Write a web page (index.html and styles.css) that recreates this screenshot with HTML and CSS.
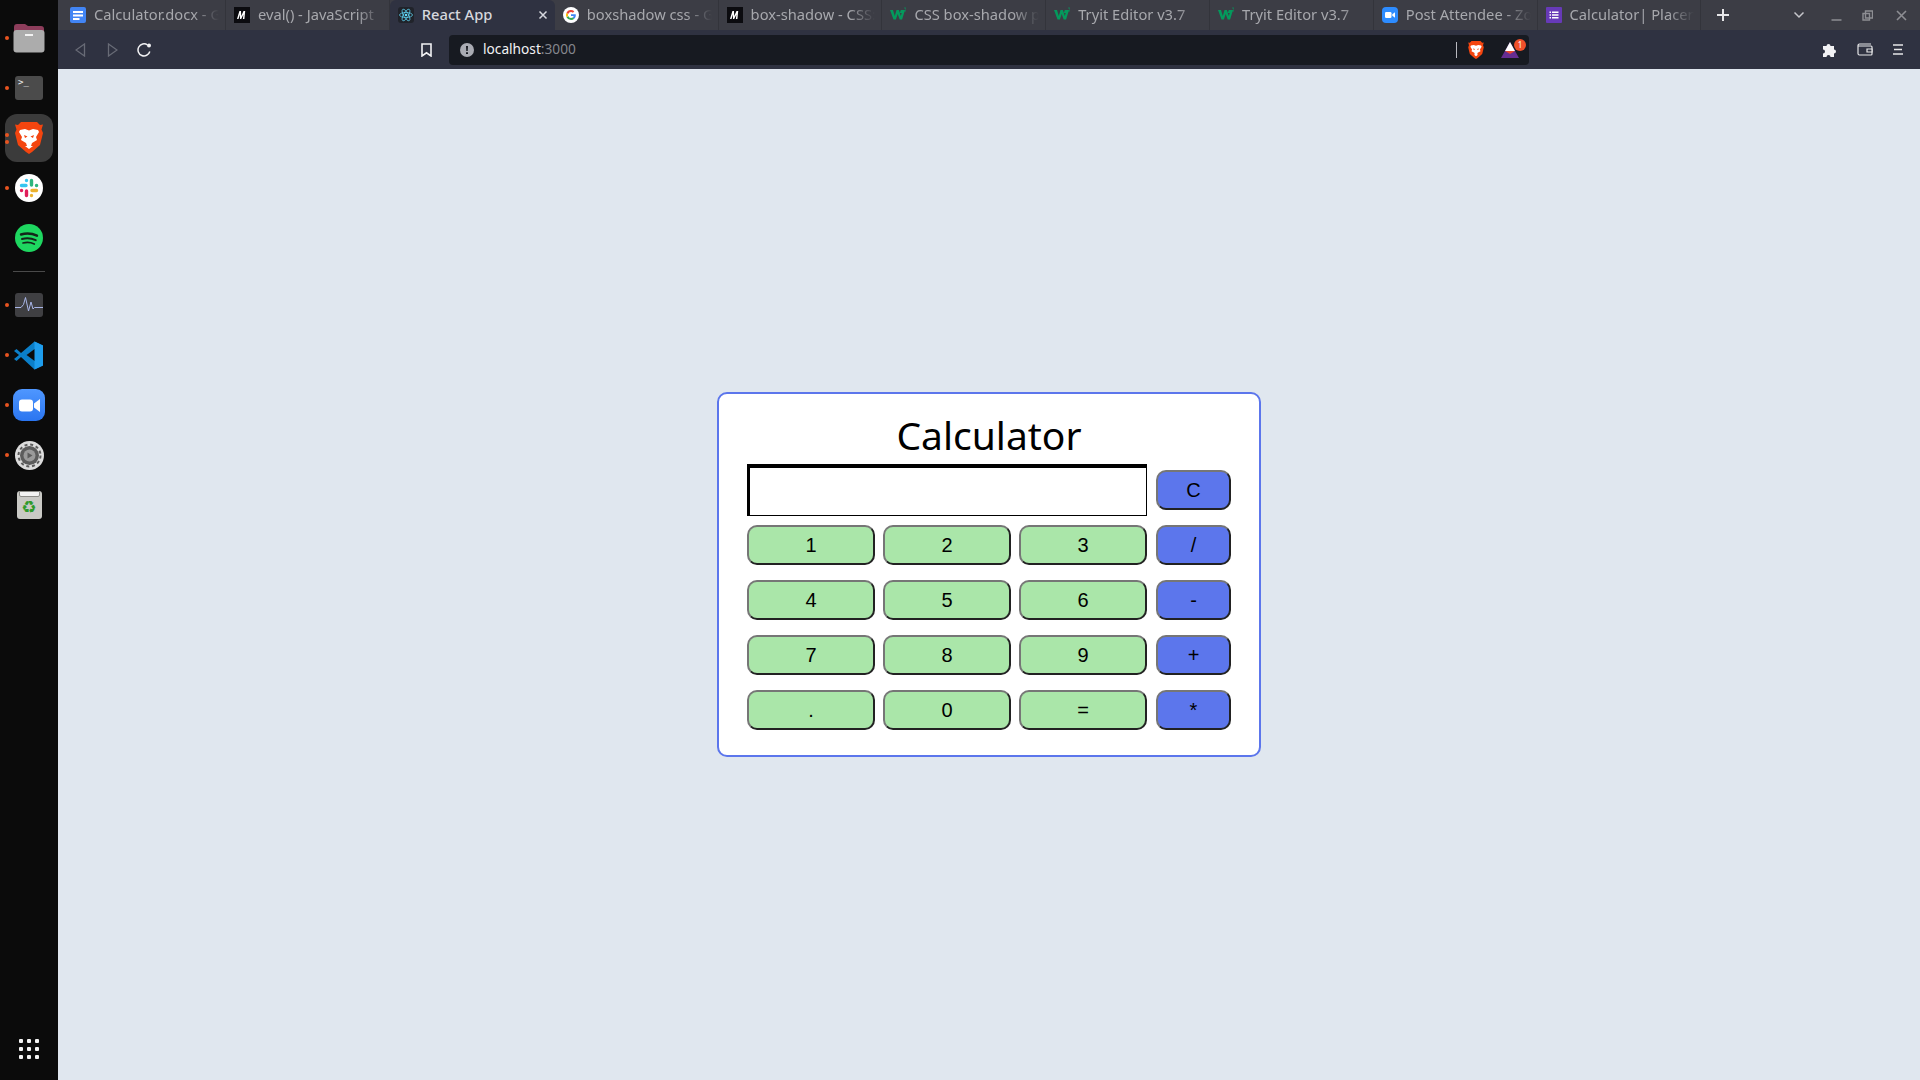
FILE: index.html
```html
<!DOCTYPE html>
<html lang="en">
<head>
    <meta charset="UTF-8">
    <title>React App</title>
    <link rel="stylesheet" href="styles.css">
</head>
<body>
    <svg class="defs" width="0" height="0">
        <symbol id="mdn" viewBox="0 0 16 16">
            <rect width="16" height="16" fill="#0b0b0f"/>
            <path d="M3 12 5.400 4H7l.2 5L9.500 4h1.700L10.400 12H8.900l.5-4.600L7.200 12H6l-.1-4.600L4.500 12z" fill="#fff"/>
        </symbol>
        <symbol id="w3" viewBox="0 0 16 16">
            <path d="M0 3h3l1.800 6L6.500 3h2.400l1.900 6 .9-3H9.800l1-3H15l-2.900 9.500H9.700L7.700 7l-1.800 5.500H3.500z" fill="#04995c"/>
            <path d="M14 1h2v3h-2" fill="none" stroke="#04995c" stroke-width=".7"/>
        </symbol>
        <symbol id="brave" viewBox="0 0 28 32">
            <path d="M6 0h16l3 3 3-.5-1.500 5L28 11l-3 12-8 7-3 2-3-2-8-7-3-12 1.500-3.500L0 2.500 3 3z" fill="#f4450f"/>
            <path d="M5 8l5-1 4 1.500L18 7l5 1 1 2-3 5 1 3-5 3-1 3h2l-4 3-4-3h2l-1-3-5-3 1-3-3-5z" fill="#fff"/>
            <path d="M9 13l3.500 1.500L10 16zM19 13l-3.500 1.500L18 16z" fill="#f4450f"/>
        </symbol>
    </svg>

    <aside class="dock">
        <div class="dock-item">
            <i class="dot"></i>
            <svg width="32" height="30" viewBox="0 0 32 30">
                <path d="M1 4a3 3 0 0 1 3-3h8l3 2h13a3 3 0 0 1 3 3v6H1z" fill="#8d3d5b"/>
                <path d="M1 8h30v3H1z" fill="#d8703c"/>
                <rect x="0.500" y="7" width="31" height="22.500" rx="3" fill="#acacac"/>
                <rect x="12" y="11" width="8" height="2" fill="#f2f2f2"/>
            </svg>
        </div>
        <div class="dock-item">
            <i class="dot"></i>
            <div class="term">&gt;_</div>
        </div>
        <div class="dock-item active">
            <i class="dot"></i><i class="dot second"></i>
            <svg width="28" height="32" viewBox="0 0 28 32"><use href="#brave"/></svg>
        </div>
        <div class="dock-item">
            <i class="dot"></i>
            <svg width="28" height="28" viewBox="0 0 28 28">
                <circle cx="14" cy="14" r="14" fill="#fff"/>
                <g stroke-width="3.400" stroke-linecap="round" fill="none">
                    <path d="M6.500 11.500h4.500M11.500 6.500v.1" stroke="#36c5f0"/>
                    <path d="M16.500 6.500v4.500M21.500 11.500h.1" stroke="#2eb67d"/>
                    <path d="M21.500 16.500H17M16.500 21.500v.1" stroke="#ecb22e"/>
                    <path d="M11.500 21.500V17M6.500 16.500h.1" stroke="#e01e5a"/>
                </g>
            </svg>
        </div>
        <div class="dock-item">
            <svg width="28" height="28" viewBox="0 0 28 28">
                <circle cx="14" cy="14" r="14" fill="#1ed760"/>
                <g fill="none" stroke="#14251a" stroke-linecap="round">
                    <path d="M6 10.500c5-1.500 11-1.200 16 1.200" stroke-width="2.400"/>
                    <path d="M7 15c4.500-1.200 9.500-.8 13.700 1.200" stroke-width="2"/>
                    <path d="M8 19c4-1 8-.6 11.300 1" stroke-width="1.700"/>
                </g>
            </svg>
        </div>
        <hr class="dock-sep">
        <div class="dock-item">
            <i class="dot"></i>
            <svg width="29" height="24" viewBox="0 0 29 24">
                <rect width="28" height="24" rx="3" fill="#3f3f42"/>
                <path d="M0 14.500h6l2.500-3 2-7 3 13.500 2.500-9 2 7 1.500-1.500H28" fill="none" stroke="#a9b6e8" stroke-width="1"/>
            </svg>
        </div>
        <div class="dock-item">
            <i class="dot"></i>
            <svg class="vscode" width="29" height="29" viewBox="0 0 29 29">
                <path d="M20.500.500 29 4.500v20l-8.500 4L7 16l-4.500 4L0 18l5-4-5-4 2.500-2L7 12z" fill="#0b7fc9"/>
                <path d="M20.500.500 29 4.500v20l-8.500 4zM20.500 8l-8 6 8 6z" fill="#1e9ded"/>
                <path d="M20.500 8v12l-8-6z" fill="#0b0b0b"/>
            </svg>
        </div>
        <div class="dock-item">
            <i class="dot"></i>
            <div class="zoom-app">
                <svg width="21" height="13" viewBox="0 0 21 13">
                    <rect width="14" height="12" y=".5" rx="3" fill="#fff"/>
                    <path d="M15 4.500 21 0v13l-6-4.500z" fill="#fff"/>
                </svg>
            </div>
        </div>
        <div class="dock-item">
            <i class="dot"></i>
            <svg width="29" height="29" viewBox="0 0 29 29">
                <circle cx="14.500" cy="14.500" r="14.500" fill="#dcdcdc"/>
                <circle cx="14.500" cy="14.500" r="9.500" fill="#5c5c5c"/>
                <circle cx="14.500" cy="14.500" r="11" fill="none" stroke="#5c5c5c" stroke-width="2" stroke-dasharray="3 2.800"/>
                <circle cx="14.500" cy="14.500" r="6" fill="#9a9a9a"/>
                <path d="M12.500 11.500v6l5-3z" fill="#5c5c5c"/>
            </svg>
        </div>
        <div class="dock-item">
            <div class="trash"><span class="trash-lid"></span><span class="recycle">♻</span></div>
        </div>
        <div class="app-grid">
            <i></i><i></i><i></i><i></i><i></i><i></i><i></i><i></i><i></i>
        </div>
    </aside>

    <div class="browser">
        <div class="tabstrip">
            <div class="tab first">
                <svg class="favicon" viewBox="0 0 16 16">
                    <rect width="16" height="16" rx="2" fill="#4285f4"/>
                    <path d="M3 4h10v2H3zM3 7.500h10v2H3zM3 11h6.500v2H3z" fill="#fff"/>
                </svg>
                <span class="tab-title">Calculator.docx - G</span>
            </div>
            <div class="tab">
                <svg class="favicon"><use href="#mdn"/></svg>
                <span class="tab-title">eval() - JavaScript</span>
            </div>
            <div class="tab current">
                <svg class="favicon" viewBox="0 0 16 16">
                    <rect width="16" height="16" rx="3" fill="#20232a"/>
                    <g fill="none" stroke="#61dafb" stroke-width=".7">
                        <ellipse cx="8" cy="8" rx="6.500" ry="2.500"/>
                        <ellipse cx="8" cy="8" rx="6.500" ry="2.500" transform="rotate(60 8 8)"/>
                        <ellipse cx="8" cy="8" rx="6.500" ry="2.500" transform="rotate(120 8 8)"/>
                    </g>
                    <circle cx="8" cy="8" r="1.300" fill="#61dafb"/>
                </svg>
                <span class="tab-title">React App</span>
                <svg class="tab-close" width="10" height="10" viewBox="0 0 10 10">
                    <path d="M1.500 1.500l7 7M8.500 1.500l-7 7" stroke="#d6d8de" stroke-width="1.500"/>
                </svg>
            </div>
            <div class="tab">
                <svg class="favicon" viewBox="0 0 16 16">
                    <circle cx="8" cy="8" r="8" fill="#fff"/>
                    <path d="M12.800 8.200c0-.4 0-.7-.1-1H8v1.900h2.700a2.300 2.300 0 0 1-1 1.500l1.600 1.200c.9-.9 1.500-2.100 1.500-3.600z" fill="#4285f4"/>
                    <path d="M8 13c1.300 0 2.400-.4 3.300-1.200l-1.600-1.200c-.5.300-1 .5-1.700.5a3 3 0 0 1-2.800-2L3.500 10.300A5 5 0 0 0 8 13z" fill="#34a853"/>
                    <path d="M5.200 9.100a3 3 0 0 1 0-2.200L3.500 5.700a5 5 0 0 0 0 4.600z" fill="#fbbc05"/>
                    <path d="M8 5c.7 0 1.400.3 1.900.7l1.400-1.400A5 5 0 0 0 3.500 5.700l1.700 1.200A3 3 0 0 1 8 5z" fill="#ea4335"/>
                </svg>
                <span class="tab-title">boxshadow css - G</span>
            </div>
            <div class="tab">
                <svg class="favicon"><use href="#mdn"/></svg>
                <span class="tab-title">box-shadow - CSS:</span>
            </div>
            <div class="tab">
                <svg class="favicon"><use href="#w3"/></svg>
                <span class="tab-title">CSS box-shadow p</span>
            </div>
            <div class="tab">
                <svg class="favicon"><use href="#w3"/></svg>
                <span class="tab-title">Tryit Editor v3.7</span>
            </div>
            <div class="tab">
                <svg class="favicon"><use href="#w3"/></svg>
                <span class="tab-title">Tryit Editor v3.7</span>
            </div>
            <div class="tab">
                <svg class="favicon" viewBox="0 0 16 16">
                    <rect width="16" height="16" rx="4" fill="#2d8cff"/>
                    <rect x="3" y="5" width="6.500" height="6" rx="1.300" fill="#fff"/>
                    <path d="M10.300 7.300 13 5.300v5.400l-2.700-2z" fill="#fff"/>
                </svg>
                <span class="tab-title">Post Attendee - Zo</span>
            </div>
            <div class="tab">
                <svg class="favicon" viewBox="0 0 16 16">
                    <rect width="16" height="16" rx="1" fill="#673ab7"/>
                    <path d="M3.500 4.500h1.500V6H3.500zM6 4.500h6.500V6H6zM3.500 7.300h1.500v1.500H3.500zM6 7.300h6.500v1.500H6zM3.500 10h1.500v1.500H3.500zM6 10h6.500v1.500H6z" fill="#fff"/>
                </svg>
                <span class="tab-title">Calculator| Placem</span>
            </div>
            <svg class="new-tab" width="14" height="14" viewBox="0 0 14 14">
                <path d="M7 1v12M1 7h12" stroke="#e6e6e8" stroke-width="2"/>
            </svg>
            <div class="window-btns">
                <svg width="12" height="8" viewBox="0 0 12 8"><path d="M1.500 1.500 6 6l4.500-4.500" fill="none" stroke="#c6c7cb" stroke-width="1.500"/></svg>
                <svg class="win-min" width="11" height="11" viewBox="0 0 11 11"><path d="M.5 10h10" stroke="#8d8e93" stroke-width="1.500"/></svg>
                <svg class="win-max" width="11" height="11" viewBox="0 0 11 11"><path d="M3.500 1h7v7h-7zM1 3.500h6.500V10H1z" fill="#3c3d45" stroke="#8d8e93" stroke-width="1.400"/></svg>
                <svg class="win-close" width="11" height="11" viewBox="0 0 11 11"><path d="M1 1l9 9M10 1l-9 9" stroke="#8d8e93" stroke-width="1.600"/></svg>
            </div>
        </div>

        <div class="toolbar">
            <svg class="nav-back" width="11" height="14" viewBox="0 0 11 14"><path d="M9.500 1v12L1 7z" fill="none" stroke="#686b76" stroke-width="1.300"/></svg>
            <svg class="nav-forward" width="11" height="14" viewBox="0 0 11 14"><path d="M1.500 1v12L10 7z" fill="none" stroke="#686b76" stroke-width="1.300"/></svg>
            <svg class="nav-reload" width="15" height="14" viewBox="0 0 15 14">
                <path d="M12.800 8.500A6 6 0 1 1 10.500 2" fill="none" stroke="#f2f2f4" stroke-width="1.500"/>
                <circle cx="12" cy="2.500" r="2" fill="#f2f2f4"/>
            </svg>
            <svg class="bookmark" width="11" height="14" viewBox="0 0 11 14"><path d="M1 1h9v12L5.500 9.800 1 13z" fill="none" stroke="#f2f2f4" stroke-width="1.600"/></svg>
            <div class="urlbar">
                <svg width="14" height="14" viewBox="0 0 14 14">
                    <circle cx="7" cy="7" r="7" fill="#a9abb3"/>
                    <path d="M6 3h2l-.3 5H6.300zM6 9.300h2V11H6z" fill="#171a21"/>
                </svg>
                <span class="url"><span class="url-host">localhost</span>:3000</span>
                <i class="url-sep"></i>
                <svg class="shield" width="16" height="18" viewBox="0 0 28 32"><use href="#brave"/></svg>
                <div class="rewards">
                    <svg width="18" height="16" viewBox="0 0 18 16">
                        <path d="M9 0l9 16H0z" fill="#662d91"/>
                        <path d="M9 0l5 9H4z" fill="#fff"/>
                        <path d="M4 9h10l-5 3z" fill="#e8472c"/>
                    </svg>
                    <span class="badge">1</span>
                </div>
            </div>
            <div class="toolbar-right">
                <svg width="15" height="15" viewBox="0 0 15 15"><path d="M1 4h3.500a2 2 0 1 1 4 0H12v3.500a2 2 0 1 1 0 4V15H8.500a2 2 0 1 0-4 0H1v-3.500a2 2 0 1 0 0-4z" fill="#f2f2f4"/></svg>
                <svg width="16" height="13" viewBox="0 0 16 13"><path d="M14 1H2.500A1.500 1.500 0 0 0 1 2.500v8A1.500 1.500 0 0 0 2.500 12H14a1 1 0 0 0 1-1V4a1 1 0 0 0-1-1H1" fill="none" stroke="#e6e6e8" stroke-width="1.200"/><path d="M10 6h5v3h-5z" fill="#2f3241" stroke="#e6e6e8" stroke-width="1.200"/></svg>
                <svg width="10" height="11" viewBox="0 0 10 11"><path d="M0 1h10M1 5.500h8M0 10h10" stroke="#e6e6e8" stroke-width="1.500"/></svg>
            </div>
        </div>

        <main class="page">
            <div class="calculator">
                <h1>Calculator</h1>
                <div class="row row-display">
                    <input class="display" type="text">
                    <button class="key op">C</button>
                </div>
                <div class="row">
                    <button class="key">1</button>
                    <button class="key">2</button>
                    <button class="key">3</button>
                    <button class="key op">/</button>
                </div>
                <div class="row">
                    <button class="key">4</button>
                    <button class="key">5</button>
                    <button class="key">6</button>
                    <button class="key op">-</button>
                </div>
                <div class="row">
                    <button class="key">7</button>
                    <button class="key">8</button>
                    <button class="key">9</button>
                    <button class="key op">+</button>
                </div>
                <div class="row">
                    <button class="key">.</button>
                    <button class="key">0</button>
                    <button class="key">=</button>
                    <button class="key op">*</button>
                </div>
            </div>
        </main>
    </div>
</body>
</html>
```

FILE: styles.css
```css
* {
    box-sizing: border-box;
}
html, body {
    height: 100%;
}
body {
    margin: 0;
    display: flex;
    overflow: hidden;
    font-family: "Noto Sans", sans-serif;
    background-color: #e0e7ef;
}
.defs {
    position: absolute;
}

/* dock */
.dock {
    width: 58px;
    flex-shrink: 0;
    height: 100%;
    display: flex;
    flex-direction: column;
    padding-top: 13px;
    background-color: #0b0b0b;
}
.dock-item {
    height: 50px;
    flex-shrink: 0;
    display: flex;
    align-items: center;
    justify-content: center;
    position: relative;
}
.dock-item.active::before {
    content: "";
    position: absolute;
    left: 5px;
    top: 1px;
    width: 48px;
    height: 48px;
    border-radius: 12px;
    background-color: #3b3b3b;
}
.dock-item svg, .dock-item div {
    position: relative;
}
.dock-item .vscode {
    margin-left: -1px;
}
.dot {
    position: absolute;
    left: 5px;
    top: 23px;
    width: 4px;
    height: 4px;
    border-radius: 50%;
    background-color: #e95420;
    z-index: 1;
}
.active .dot {
    top: 20px;
}
.active .dot.second {
    top: 27px;
}
.dock-sep {
    width: 32px;
    height: 1px;
    margin: 8px 0 8px 13px;
    border: none;
    flex-shrink: 0;
    background-color: #4a4a4a;
}
.term {
    width: 28px;
    height: 24px;
    padding: 1px 3px;
    border-radius: 3px;
    background-color: #4b4b4b;
    color: #f2f2f2;
    font-family: "DejaVu Sans Mono", monospace;
    font-size: 9px;
    line-height: 11px;
}
.zoom-app {
    width: 32px;
    height: 32px;
    border-radius: 9px;
    display: flex;
    align-items: center;
    justify-content: center;
    background: linear-gradient(#4f97ff, #2a75f0);
}
.trash {
    width: 25px;
    height: 28px;
    border-radius: 3px;
    background-color: #c9c9c5;
    text-align: center;
}
.trash-lid {
    display: block;
    height: 6px;
    margin: 0 2px;
    border: 1px solid #8c8c88;
    border-radius: 0 0 2px 2px;
    background-color: #f2f2f2;
}
.recycle {
    display: block;
    color: #2f9a2a;
    font-family: "DejaVu Sans", sans-serif;
    font-size: 17px;
    line-height: 20px;
}
.app-grid {
    margin: auto 0 21px 19px;
    width: 20px;
    display: grid;
    grid-template-columns: repeat(3, 4px);
    gap: 4px;
}
.app-grid i {
    width: 4px;
    height: 4px;
    border-radius: 1px;
    background-color: #f4f4f4;
}

/* browser chrome */
.browser {
    flex: 1;
    min-width: 0;
    display: flex;
    flex-direction: column;
}
.tabstrip {
    height: 30px;
    flex-shrink: 0;
    display: flex;
    align-items: center;
    background-color: #3c3d45;
}
.tab {
    width: 163.8px;
    height: 30px;
    flex-shrink: 0;
    display: flex;
    align-items: center;
    gap: 8px;
    padding: 0 6px 0 8px;
    border-right: 1px solid #33343b;
    position: relative;
}
.tab.first {
    width: 168px;
    padding-left: 12px;
}
.tab.current {
    width: 165px;
    padding-right: 7px;
    background-color: #2f3241;
    border-radius: 6px 6px 0 0;
    border-right: none;
}
.favicon {
    width: 16px;
    height: 16px;
    flex-shrink: 0;
}
.tab-title {
    flex: 1;
    min-width: 0;
    overflow: hidden;
    white-space: nowrap;
    padding-bottom: 2px;
    color: #a7a8ad;
    font-size: 14.7px;
    -webkit-mask-image: linear-gradient(to right, #000 calc(100% - 26px), transparent);
    mask-image: linear-gradient(to right, #000 calc(100% - 26px), transparent);
}
.current .tab-title {
    color: #d6d8de;
    font-weight: 500;
    -webkit-mask-image: none;
    mask-image: none;
}
.tab-close {
    flex-shrink: 0;
}
.new-tab {
    margin-left: 15px;
    flex-shrink: 0;
}
.window-btns {
    margin-left: auto;
    padding-right: 13px;
    display: flex;
    align-items: center;
}
.win-min {
    margin-left: 26px;
}
.win-max {
    margin-left: 20px;
}
.win-close {
    margin-left: 23px;
}
.toolbar {
    height: 39px;
    flex-shrink: 0;
    display: flex;
    align-items: center;
    background-color: #2f3241;
}
.nav-back {
    margin-left: 17px;
}
.nav-forward {
    margin-left: 21px;
}
.nav-reload {
    margin-left: 19px;
}
.bookmark {
    margin-left: 269px;
}
.urlbar {
    width: 1080px;
    height: 30px;
    margin-left: 17px;
    padding: 0 10px 0 11px;
    display: flex;
    align-items: center;
    border-radius: 4px;
    background-color: #171a21;
}
.url {
    margin-left: 9px;
    padding-bottom: 2px;
    color: #85878e;
    font-size: 13.7px;
}
.url-host {
    color: #f2f2f4;
}
.url-sep {
    width: 1px;
    height: 16px;
    margin-left: auto;
    background-color: #b9bac0;
}
.shield {
    margin-left: 11px;
}
.rewards {
    margin-left: 17px;
    position: relative;
    display: flex;
}
.badge {
    position: absolute;
    left: 13px;
    top: -3px;
    width: 12px;
    height: 12px;
    border-radius: 50%;
    background-color: #f0502a;
    color: #fff;
    font-size: 8px;
    line-height: 12px;
    text-align: center;
}
.toolbar-right {
    margin-left: auto;
    width: 98px;
    padding-right: 17px;
    display: flex;
    align-items: center;
    justify-content: space-between;
}

/* calculator */
.page {
    flex: 1;
    display: flex;
    align-items: center;
    justify-content: center;
    background-color: #e0e7ef;
}
.calculator {
    width: 544px;
    height: 365px;
    padding: 15px 28px 0;
    border: 2px solid #5c76ec;
    border-radius: 10px;
    background-color: #fff;
}
.calculator h1 {
    margin: 0;
    height: 55px;
    color: #000;
    font-size: 39px;
    font-weight: 400;
    line-height: 52px;
    text-align: center;
}
.row {
    display: grid;
    grid-template-columns: 128px 128px 128px 76px;
    column-gap: 8px;
    margin-bottom: 15px;
}
.row-display {
    align-items: center;
    margin-bottom: 9px;
}
.display {
    grid-column: span 3;
    height: 52px;
    border-style: solid;
    border-color: #000;
    border-width: 4px 1px 1px 3px;
    background-color: #fff;
}
.key {
    height: 40px;
    padding: 0;
    border: 2px solid;
    border-color: #767676 #222 #222 #767676;
    border-radius: 10px;
    background-color: #aae6a9;
    color: #000;
    font-family: "Liberation Sans", Arial, sans-serif;
    font-size: 20px;
}
.key.op {
    margin-left: 1px;
    background-color: #5c76ec;
}
```
